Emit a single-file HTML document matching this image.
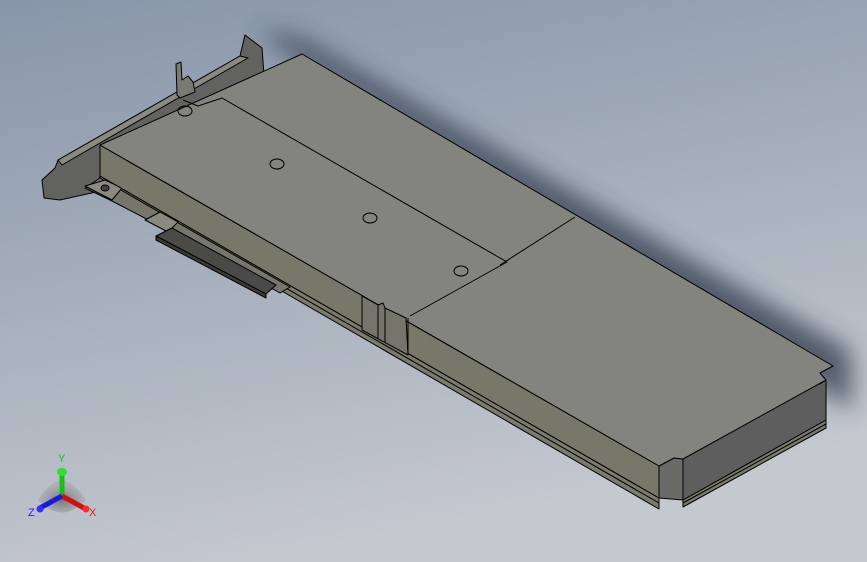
<!DOCTYPE html>
<html><head><meta charset="utf-8"><style>
html,body{margin:0;padding:0;width:867px;height:562px;overflow:hidden}
svg{display:block}
</style></head><body>
<svg width="867" height="562" viewBox="0 0 867 562" xmlns="http://www.w3.org/2000/svg">
<defs>
<linearGradient id="bg" x1="0" y1="0" x2="0.3" y2="1">
<stop offset="0" stop-color="#8796a9"/><stop offset="1" stop-color="#c4c8cf"/>
</linearGradient>
<filter id="bl" x="-20%" y="-20%" width="140%" height="140%"><feGaussianBlur stdDeviation="12"/></filter>
<radialGradient id="tri" cx="0.5" cy="0.6" r="0.5"><stop offset="0" stop-color="#555"/><stop offset="1" stop-color="#999" stop-opacity="0.5"/></radialGradient>
</defs>
<rect width="867" height="562" fill="url(#bg)"/>
<polygon points="255,30 300,38 850,350 852,410 830,395 302,62" fill="#2e3748" opacity="0.75" filter="url(#bl)"/>
<g stroke="#000" stroke-width="1" stroke-linejoin="round">
<polygon points="58,160 240,56 245,35 262,48 264,75 102,168 96,192 78,196 60,200 44,198 42,180 55,168" fill="#626260"/>
<polygon points="58,160 240,56 248,58 100,143 62,165" fill="#8a8a82"/>
<polygon points="176,64 181,62 182,80 188,76 193,82 195,92 180,98 177,95" fill="#7a7a72"/>
<!-- lower strips -->
<polygon points="100,176 659,498 659,509 100,186" fill="#7a7a6e"/>
<line x1="100" y1="181" x2="659" y2="503"/>
<polygon points="683,500 826,420 826,428 683,507" fill="#7a7a6e"/>
<line x1="683" y1="503" x2="826" y2="424"/>
<!-- pcb -->
<polygon points="100,178 290,287 280,293 160,226 110,200 85,188" fill="#76766c"/>
<polygon points="85,186 105,180 122,188 112,200" fill="#8a8a80"/>
<ellipse cx="105" cy="188" rx="4" ry="3" fill="#444"/>
<polygon points="145,220 160,212 178,222 168,232" fill="#8a8a80"/>
<polygon points="156,236 172,228 276,285 266,294" fill="#4a4a46"/>
<polygon points="156,236 266,294 266,298 156,240" fill="#3a3a36"/>
<!-- front face -->
<polygon points="100,145 659,466 659,498 100,176" fill="#77776a"/>
<polygon points="683,459 820,380 820,384 826,380 826,420 683,500" fill="#5e5e5e"/>
<polygon points="659,466 674,458 683,459 683,500 659,498" fill="#6a6a66"/>
<polygon points="100,145 302,54 833,366 820,373 826,380 683,459 674,458 659,466" fill="#84847e"/>
<polyline points="183,100 198,106 222,98 507,262 410,316" fill="none"/>
<line x1="500" y1="265" x2="575" y2="217"/>
<ellipse cx="185" cy="111" rx="7" ry="5" fill="none"/>
<ellipse cx="277" cy="164" rx="7" ry="5" fill="none"/>
<ellipse cx="370" cy="218" rx="7" ry="5" fill="none"/>
<ellipse cx="461" cy="271" rx="7" ry="5" fill="none"/>
<polygon points="362,296 378,305 383,303 385,308 406,318 408,355 362,330" fill="#75756c"/>
<line x1="362" y1="296" x2="362" y2="330"/>
<line x1="378" y1="305" x2="378" y2="338"/>
<line x1="385" y1="308" x2="385" y2="342"/>
<line x1="408" y1="318" x2="408" y2="355"/>
</g>
<g>
<path d="M38,500 Q62,462 86,500 Q62,525 38,500Z" fill="url(#tri)" opacity="0.7"/>
<line x1="62" y1="496" x2="62" y2="472" stroke="#17c017" stroke-width="5"/>
<ellipse cx="62" cy="472" rx="5" ry="4" fill="#30e030"/>
<line x1="62" y1="496" x2="84" y2="508" stroke="#d01010" stroke-width="5"/>
<circle cx="86" cy="509" r="3.5" fill="#f03030"/>
<line x1="62" y1="496" x2="40" y2="508" stroke="#1a1adf" stroke-width="5"/>
<circle cx="40" cy="509" r="3.5" fill="#3030ff"/>
<text x="58" y="462" font-family="Liberation Sans, sans-serif" font-size="11" fill="#20c020">Y</text>
<text x="89" y="516" font-family="Liberation Sans, sans-serif" font-size="11" fill="#e02020">X</text>
<text x="28" y="516" font-family="Liberation Sans, sans-serif" font-size="11" fill="#2020e0">Z</text>
</g>
</svg>
</body></html>
